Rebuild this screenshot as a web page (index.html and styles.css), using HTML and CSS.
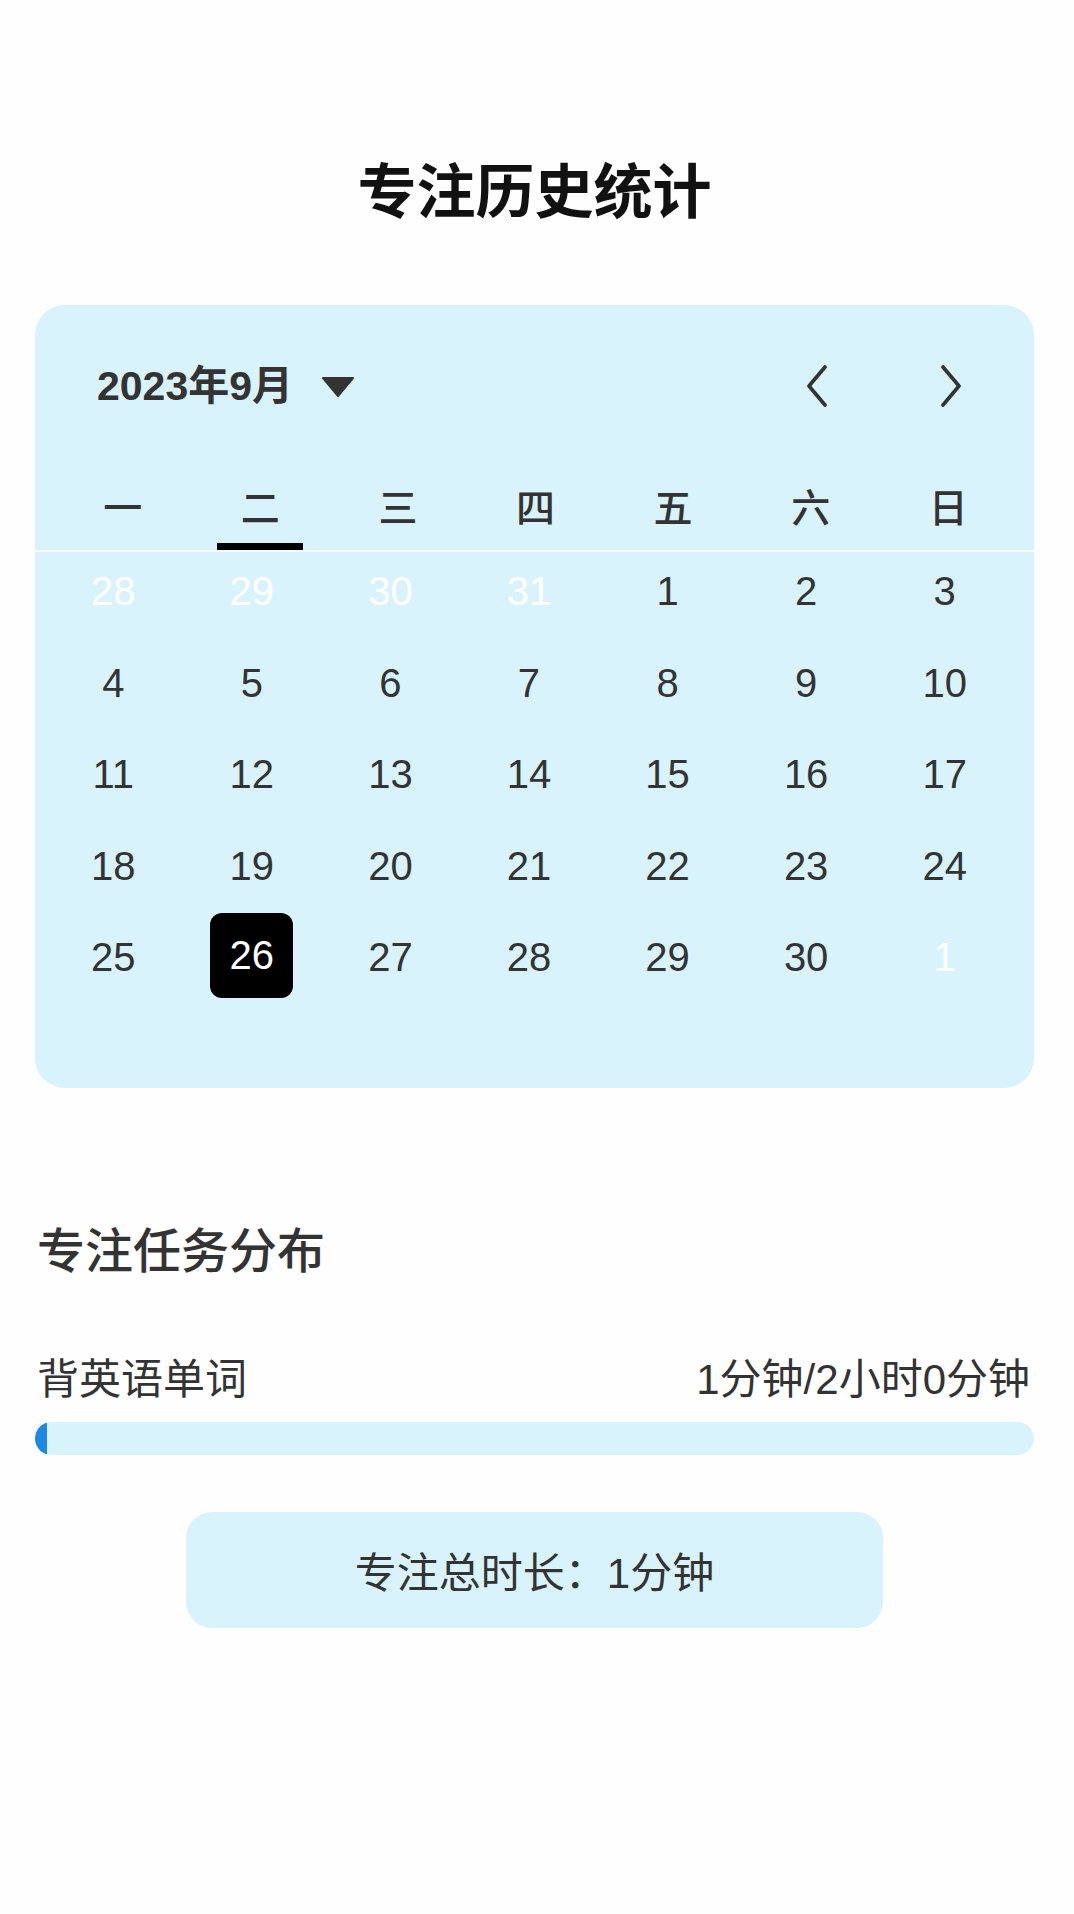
FILE: index.html
```html
<!DOCTYPE html>
<html lang="zh-CN">
<head>
<meta charset="utf-8">
<title>专注历史统计</title>
<link rel="stylesheet" href="styles.css">
</head>
<body>
<div class="page">
  <h1 class="title">专注历史统计</h1>

  <section class="calendar">
    <div class="cal-header">
      <div class="month-picker">
        <span class="month-text">2023年9月</span>
        <svg class="caret" width="34" height="22" viewBox="0 0 34 22"><polygon points="2,2 32,2 17,20" fill="#333" stroke="#333" stroke-width="2" stroke-linejoin="round"/></svg>
      </div>
      <div class="nav">
        <svg class="chev" width="24" height="42" viewBox="0 0 24 42"><polyline points="20,2 4,21 20,40" fill="none" stroke="#333" stroke-width="3.6" stroke-linecap="round" stroke-linejoin="round"/></svg>
        <svg class="chev" width="24" height="42" viewBox="0 0 24 42"><polyline points="4,2 20,21 4,40" fill="none" stroke="#333" stroke-width="3.6" stroke-linecap="round" stroke-linejoin="round"/></svg>
      </div>
    </div>

    <div class="weekdays">
      <div class="wd"><span>一</span></div>
      <div class="wd active"><span>二</span></div>
      <div class="wd"><span>三</span></div>
      <div class="wd"><span>四</span></div>
      <div class="wd"><span>五</span></div>
      <div class="wd"><span>六</span></div>
      <div class="wd"><span>日</span></div>
    </div>

    <div class="days">
      <div class="day dim">28</div><div class="day dim">29</div><div class="day dim">30</div><div class="day dim">31</div><div class="day">1</div><div class="day">2</div><div class="day">3</div>
      <div class="day">4</div><div class="day">5</div><div class="day">6</div><div class="day">7</div><div class="day">8</div><div class="day">9</div><div class="day">10</div>
      <div class="day">11</div><div class="day">12</div><div class="day">13</div><div class="day">14</div><div class="day">15</div><div class="day">16</div><div class="day">17</div>
      <div class="day">18</div><div class="day">19</div><div class="day">20</div><div class="day">21</div><div class="day">22</div><div class="day">23</div><div class="day">24</div>
      <div class="day">25</div><div class="day"><span class="selected">26</span></div><div class="day">27</div><div class="day">28</div><div class="day">29</div><div class="day">30</div><div class="day dim">1</div>
    </div>
  </section>

  <h2 class="section-title">专注任务分布</h2>

  <div class="task-row">
    <span class="task-name">背英语单词</span>
    <span class="task-time">1分钟/2小时0分钟</span>
  </div>
  <div class="bar"><div class="bar-fill" style="width: 12px"></div></div>

  <div class="total">专注总时长：1分钟</div>
</div>
</body>
</html>
```

FILE: styles.css
```css
html, body {
  margin: 0;
  padding: 0;
  background: #fefefe;
}

body {
  font-family: "Liberation Sans", "Noto Sans CJK SC", sans-serif;
  color: #333;
}

.page {
  width: 999px;
  margin-left: 35px;
  padding-top: 148px;
  padding-bottom: 120px;
}

.title {
  margin: 0;
  font-family: "Noto Sans CJK SC", sans-serif;
  font-size: 59px;
  font-weight: 700;
  line-height: 80px;
  text-align: center;
  color: #111;
}

.calendar {
  margin-top: 77px;
  background: #d9f3fc;
  border-radius: 30px;
  padding-bottom: 84px;
}

.cal-header {
  display: flex;
  align-items: center;
  justify-content: space-between;
  height: 50px;
  padding: 56px 71px 0 62px;
}

.month-picker {
  display: flex;
  align-items: center;
  gap: 28px;
}

.month-text {
  font-size: 41px;
  font-weight: 700;
  line-height: 50px;
  color: #333;
}

.caret {
  display: block;
  margin-top: 2px;
}

.nav {
  display: flex;
  align-items: center;
  gap: 110px;
}

.chev {
  display: block;
}

.weekdays {
  display: grid;
  grid-template-columns: repeat(7, 1fr);
  margin-top: 66px;
  padding: 0 17px 0 19px;
  border-bottom: 2px solid rgba(255, 255, 255, 0.75);
}

.wd {
  display: flex;
  flex-direction: column;
  align-items: center;
}

.wd span {
  font-family: "Noto Sans CJK SC", sans-serif;
  font-size: 39px;
  font-weight: 500;
  line-height: 56px;
  color: #333;
}

.wd::after {
  content: "";
  display: block;
  width: 86px;
  height: 7px;
  margin-top: 10px;
  background: transparent;
}

.wd.active::after {
  background: #000;
}

.days {
  display: grid;
  grid-template-columns: repeat(7, 1fr);
  grid-auto-rows: 91.5px;
  margin-top: -6px;
  padding: 0 20px 0 9px;
}

.day {
  display: flex;
  align-items: center;
  justify-content: center;
  font-size: 40px;
  color: #333;
}

.day.dim {
  color: #fff;
}

.selected {
  display: flex;
  align-items: center;
  justify-content: center;
  width: 83px;
  height: 85px;
  margin-top: -4px;
  border-radius: 12px;
  background: #000;
  color: #fff;
}

.section-title {
  margin: 127px 0 0 2px;
  font-family: "Noto Sans CJK SC", sans-serif;
  font-size: 48px;
  font-weight: 500;
  line-height: 64px;
  color: #333;
}

.task-row {
  display: flex;
  justify-content: space-between;
  align-items: center;
  margin-top: 73px;
  padding: 0 4px 0 2px;
  font-size: 42px;
  line-height: 56px;
  color: #333;
}

.bar {
  margin-top: 14px;
  height: 33px;
  border-radius: 17px;
  background: #d9f3fc;
  overflow: hidden;
}

.bar-fill {
  height: 100%;
  background: #1e88e5;
}

.total {
  width: 697px;
  height: 116px;
  margin: 57px auto 0;
  border-radius: 26px;
  background: #d9f3fc;
  display: flex;
  align-items: center;
  justify-content: center;
  font-size: 42px;
  color: #333;
}
```
